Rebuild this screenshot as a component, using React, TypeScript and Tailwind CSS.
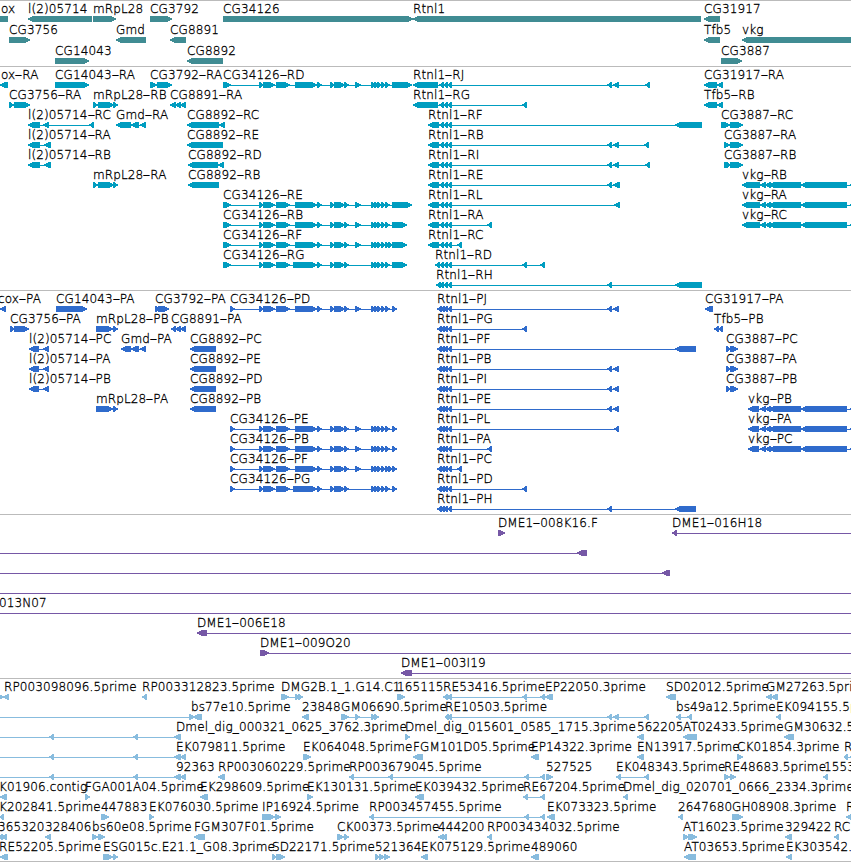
import React from 'react';

type Exon = [number, number];
// label, start of the label, strand, exons, optional extent of the connecting line
type Feature = [string, number, 1 | -1, Exon[], Exon?];

interface TrackData {
  name: string;
  fill: string;
  rowClass: string;
  padClass: string;
  rows: Feature[][];
}

// exons shared by several transcripts
const rtn: Exon[] = [[439, 444], [443, 448], [447, 452]];
const rtnCds: Exon[] = [[437, 442], [439, 445], [442, 448], [447, 452]];
const cgStart: Exon[] = [[259, 263], [263, 275], [276, 290]];
const cgMid: Exon[] = [[295, 317], [317, 322], [330, 334], [334, 345], [344, 349]];
const cgTail: Exon[] = [[371, 375], [374, 379], [377, 382], [381, 386], [385, 390]];
const vkg: Exon[] = [[760, 766], [765, 771], [769, 801], [801, 847], [850, 856]];
const gmd: Exon[] = [[131, 139], [140, 146]];
const cg8891: Exon[] = [[175, 181], [180, 186]];

const genes: Feature[][] = [
  [
    ['ox', 1, -1, [[-20, 8]]],
    ['l(2)05714', 28, -1, [[28, 92]]],
    ['mRpL28', 93, 1, [[93, 116]]],
    ['CG3792', 150, 1, [[150, 172]]],
    ['CG34126', 223, 1, [[223, 413]]],
    ['Rtnl1', 413, -1, [[413, 701]]],
    ['CG31917', 704, -1, [[704, 720]]],
  ],
  [
    ['CG3756', 9, 1, [[9, 30]]],
    ['Gmd', 116, -1, [[116, 146]]],
    ['CG8891', 170, -1, [[170, 186]]],
    ['Tfb5', 704, -1, [[704, 720]]],
    ['vkg', 742, -1, [[742, 870]]],
  ],
  [
    ['CG14043', 55, 1, [[55, 89]]],
    ['CG8892', 187, -1, [[187, 223]]],
    ['CG3887', 721, 1, [[721, 742]]],
  ],
];

const transcripts: Feature[][] = [
  [
    ['ox-RA', 1, -1, [[0, 8]]],
    ['CG14043-RA', 55, 1, [[55, 89]]],
    ['CG3792-RA', 150, 1, [[150, 157], [157, 172]]],
    ['CG34126-RD', 223, 1, [[223, 231], ...cgStart, ...cgMid, [355, 361], ...cgTail, [392, 412]]],
    ['Rtnl1-RJ', 413, -1, [[413, 438], ...rtn, [607, 612], [613, 619], [645, 650]]],
    ['CG31917-RA', 704, -1, [[704, 717], [717, 723]]],
  ],
  [
    ['CG3756-RA', 9, 1, [[9, 14], [14, 30]]],
    ['mRpL28-RB', 93, 1, [[93, 98], [98, 114], [113, 118]]],
    ['CG8891-RA', 170, -1, [[170, 176], ...cg8891]],
    ['Rtnl1-RG', 413, -1, [[413, 438], ...rtn, [522, 527]]],
    ['Tfb5-RB', 704, -1, [[704, 717], [717, 723]]],
  ],
  [
    ['l(2)05714-RC', 28, -1, [[28, 40], [43, 49], [89, 94]]],
    ['Gmd-RA', 116, -1, [[116, 131], ...gmd]],
    ['CG8892-RC', 187, -1, [[187, 219], [219, 225]]],
    ['Rtnl1-RF', 428, -1, [[428, 439], ...rtn, [675, 702]]],
    ['CG3887-RC', 721, 1, [[721, 730], [730, 743]]],
  ],
  [
    ['l(2)05714-RA', 28, -1, [[28, 40], [44, 51]]],
    ['CG8892-RE', 187, -1, [[187, 223]]],
    ['Rtnl1-RB', 428, -1, [[428, 439], ...rtn, [607, 612], [613, 619], [644, 649]]],
    ['CG3887-RA', 724, 1, [[724, 730], [730, 743]]],
  ],
  [
    ['l(2)05714-RB', 28, -1, [[28, 40], [44, 51]]],
    ['CG8892-RD', 188, -1, [[188, 218], [218, 224]]],
    ['Rtnl1-RI', 428, -1, [[428, 439], ...rtn, [607, 612], [613, 619], [645, 650]]],
    ['CG3887-RB', 724, 1, [[724, 729], [726, 731], [730, 743]]],
  ],
  [
    ['mRpL28-RA', 93, 1, [[93, 98], [98, 114], [113, 118]]],
    ['CG8892-RB', 188, -1, [[188, 219]]],
    ['Rtnl1-RE', 428, -1, [[428, 439], ...rtn, [607, 612], [613, 620]]],
    ['vkg-RB', 742, -1, [[742, 760], ...vkg]],
  ],
  [
    ['CG34126-RE', 223, 1, [[223, 231], ...cgStart, ...cgMid, [355, 361], ...cgTail, [392, 412]]],
    ['Rtnl1-RL', 428, -1, [[428, 439], ...rtn, [614, 620]]],
    ['vkg-RA', 742, -1, [[742, 760], ...vkg]],
  ],
  [
    ['CG34126-RB', 223, 1, [[223, 231], ...cgStart, ...cgMid, [355, 361], ...cgTail, [392, 407]]],
    ['Rtnl1-RA', 428, -1, [[428, 439], ...rtn, [487, 492]]],
    ['vkg-RC', 742, -1, [[742, 760], ...vkg]],
  ],
  [
    ['CG34126-RF', 223, 1, [[223, 231], ...cgStart, ...cgMid, [355, 361], ...cgTail, [388, 393], [392, 407]]],
    ['Rtnl1-RC', 428, -1, [[428, 439], ...rtn, [457, 462]]],
  ],
  [
    ['CG34126-RG', 223, 1, [[223, 231], ...cgStart, [293, 297], ...cgMid, ...cgTail, [392, 407]]],
    ['Rtnl1-RD', 435, -1, [[435, 440], ...rtn, [522, 527], [540, 545]]],
  ],
  [['Rtnl1-RH', 436, -1, [[436, 441], ...rtn, [607, 612], [675, 702]]]],
];

const proteins: Feature[][] = [
  [
    ['cox-PA', -2, -1, [[0, 6]]],
    ['CG14043-PA', 56, 1, [[56, 87]]],
    ['CG3792-PA', 155, 1, [[155, 159], [158, 169]]],
    ['CG34126-PD', 230, 1, [[230, 235], ...cgStart, ...cgMid, [355, 361], ...cgTail, [392, 397]]],
    ['Rtnl1-PJ', 437, -1, [...rtnCds, [607, 612], [613, 619]]],
    ['CG31917-PA', 705, -1, [[705, 713]]],
  ],
  [
    ['CG3756-PA', 10, 1, [[10, 14], [14, 29]]],
    ['mRpL28-PB', 96, 1, [[96, 113], [113, 118]]],
    ['CG8891-PA', 171, -1, [[171, 176], ...cg8891]],
    ['Rtnl1-PG', 437, -1, [...rtnCds, [522, 527]]],
    ['Tfb5-PB', 714, -1, [[714, 719], [718, 723]]],
  ],
  [
    ['l(2)05714-PC', 29, -1, [[29, 39], [43, 49]]],
    ['Gmd-PA', 121, -1, [[121, 131], ...gmd]],
    ['CG8892-PC', 190, -1, [[190, 216]]],
    ['Rtnl1-PF', 437, -1, [...rtnCds, [675, 696]]],
    ['CG3887-PC', 726, 1, [[726, 731], [730, 738]]],
  ],
  [
    ['l(2)05714-PA', 29, -1, [[29, 39], [43, 49]]],
    ['CG8892-PE', 190, -1, [[190, 216]]],
    ['Rtnl1-PB', 437, -1, [...rtnCds, [607, 612], [613, 619]]],
    ['CG3887-PA', 726, 1, [[726, 731], [730, 738]]],
  ],
  [
    ['l(2)05714-PB', 29, -1, [[29, 39], [43, 49]]],
    ['CG8892-PD', 190, -1, [[190, 216]]],
    ['Rtnl1-PI', 437, -1, [...rtnCds, [607, 612], [613, 619]]],
    ['CG3887-PB', 726, 1, [[726, 731], [730, 738]]],
  ],
  [
    ['mRpL28-PA', 96, 1, [[96, 113], [113, 118]]],
    ['CG8892-PB', 190, -1, [[190, 216]]],
    ['Rtnl1-PE', 437, -1, [...rtnCds, [607, 612], [613, 619]]],
    ['vkg-PB', 748, -1, [[748, 759], ...vkg]],
  ],
  [
    ['CG34126-PE', 230, 1, [[230, 235], ...cgStart, ...cgMid, [355, 361], ...cgTail, [392, 397]]],
    ['Rtnl1-PL', 437, -1, [...rtnCds, [614, 619]]],
    ['vkg-PA', 748, -1, [[748, 759], ...vkg]],
  ],
  [
    ['CG34126-PB', 230, 1, [[230, 235], ...cgStart, ...cgMid, [355, 361], ...cgTail, [392, 397]]],
    ['Rtnl1-PA', 437, -1, [...rtnCds, [487, 492]]],
    ['vkg-PC', 748, -1, [[748, 759], ...vkg]],
  ],
  [
    ['CG34126-PF', 230, 1, [[230, 235], ...cgStart, ...cgMid, [355, 361], ...cgTail, [388, 393], [392, 397]]],
    ['Rtnl1-PC', 437, -1, [...rtnCds, [457, 462]]],
  ],
  [
    ['CG34126-PG', 230, 1, [[230, 235], ...cgStart, [293, 297], ...cgMid, ...cgTail, [392, 397]]],
    ['Rtnl1-PD', 437, -1, [...rtnCds, [522, 527]]],
  ],
  [['Rtnl1-PH', 437, -1, [...rtnCds, [607, 612], [675, 696]]]],
];

const bacs: Feature[][] = [
  [
    ['DME1-008K16.F', 498, 1, [[498, 505]]],
    ['DME1-016H18', 672, -1, [[672, 677]], [672, 851]],
  ],
  [['', 0, -1, [[577, 587]], [0, 587]]],
  [['', 0, -1, [[662, 670]], [0, 670]]],
  [['', 0, -1, [], [0, 851]]],
  [['013N07', -1, -1, [], [0, 851]]],
  [['DME1-006E18', 197, -1, [[197, 207]], [197, 851]]],
  [['DME1-009O20', 260, 1, [[260, 269]], [260, 851]]],
  [['DME1-003I19', 401, -1, [[401, 412]], [401, 851]]],
];

const ests: Feature[][] = [
  [
    ['', 0, 1, [[-4, 4]]],
    ['RP003098096.5prime', 4, -1, [[3, 9]]],
    ['RP003312823.5prime', 142, -1, [[142, 147]]],
    ['DMG2B.1_1.G14.C1', 281, 1, [[281, 289], [295, 300], [298, 303]]],
    ['165115', 397, 1, [[397, 405]]],
    ['RE53416.5prime', 443, -1, [[443, 448], [446, 452], [522, 527], [540, 545]]],
    ['EP22050.3prime', 545, -1, [[545, 553]]],
    ['SD02012.5prime', 666, -1, [[666, 676]]],
    ['GM27263.5prime', 766, -1, [[766, 772], [771, 778]]],
  ],
  [
    ['', 0, 1, [[189, 195]], [0, 190]],
    ['bs77e10.5prime', 191, -1, [[193, 202]]],
    ['23848', 302, -1, [[302, 309]]],
    ['GM06690.5prime', 341, 1, [[341, 346], [343, 349], [355, 360], [371, 376], [374, 379]]],
    ['RE10503.5prime', 445, -1, [[445, 449], [447, 452], [607, 612], [613, 619], [644, 649]]],
    ['bs49a12.5prime', 676, -1, [[676, 681], [687, 692]]],
    ['EK094155.5prime', 776, -1, [[776, 781]]],
  ],
  [
    ['Dmel_dig_000321_0625_3762.3prime', 176, -1, [[49, 54], [133, 138], [174, 181]], [0, 181]],
    ['Dmel_dig_015601_0585_1715.3prime', 405, 1, [[405, 410]]],
    ['562205', 637, -1, [[637, 644]]],
    ['AT02433.5prime', 683, -1, [[683, 697]]],
    ['GM30632.5prime', 784, -1, [[784, 794]]],
  ],
  [
    ['EK079811.5prime', 176, -1, [[49, 54], [133, 138], [174, 181], [180, 186]], [0, 186]],
    ['EK064048.5prime', 303, 1, [[303, 311]]],
    ['FGM101D05.5prime', 413, -1, [[413, 423]]],
    ['EP14322.3prime', 531, -1, [[531, 539]]],
    ['EN13917.5prime', 637, -1, [[637, 644]]],
    ['CK01854.3prime', 737, 1, [[737, 743]]],
    ['R', 844, -1, [[844, 848], [850, 855]]],
  ],
  [
    ['92363', 176, -1, [[49, 54], [133, 138], [174, 181], [180, 186]], [0, 186]],
    ['RP003060229.5prime', 218, -1, [[218, 225]]],
    ['RP003679045.5prime', 349, -1, [[349, 354], [388, 393], [524, 529], [540, 545]]],
    ['527525', 546, 1, [[546, 553]]],
    ['EK048343.5prime', 616, -1, [[616, 621], [644, 649]]],
    ['RE48683.5prime', 724, 1, [[724, 730], [730, 736]]],
    ['1553', 824, -1, [[823, 828]]],
  ],
  [
    ['K01906.contig', -1, -1, [[0, 7]]],
    ['FGA001A04.5prime', 85, 1, [[85, 90]]],
    ['EK298609.5prime', 200, -1, [[200, 208]]],
    ['EK130131.5prime', 307, 1, [[307, 313]]],
    ['EK039432.5prime', 415, -1, [[415, 424]]],
    ['RE67204.5prime', 523, -1, [[523, 528], [540, 545]]],
    ['Dmel_dig_020701_0666_2334.3prime', 623, -1, [[623, 628]]],
  ],
  [
    ['K202841.5prime', -1, -1, [[0, 4]]],
    ['447883', 101, 1, [[101, 109]]],
    ['EK076030.5prime', 149, 1, [[149, 154]]],
    ['IP16924.5prime', 262, 1, [[262, 275], [275, 281]]],
    ['RP003457455.5prime', 369, -1, [[369, 374], [524, 529], [540, 545]]],
    ['EK073323.5prime', 547, -1, [[547, 555]]],
    ['2647680', 678, -1, [[678, 683]]],
    ['GH08908.3prime', 732, 1, [[732, 743]]],
    ['R', 846, -1, [[846, 854]]],
  ],
  [
    ['365320', -2, -1, [[-2, 3], [1, 7]]],
    ['328406', 45, -1, [[45, 51]]],
    ['bs60e08.5prime', 92, 1, [[92, 98], [98, 105]]],
    ['FGM307F01.5prime', 194, -1, [[194, 205]]],
    ['CK00373.5prime', 337, 1, [[337, 344], [344, 349]]],
    ['444200', 438, -1, [[438, 444], [442, 447]]],
    ['RP003434032.5prime', 487, -1, [[487, 492]]],
    ['AT16023.5prime', 683, 1, [[683, 689], [688, 697]]],
    ['329422', 785, -1, [[785, 792]]],
    ['RC', 834, -1, [[834, 839]]],
  ],
  [
    ['RE52205.5prime', -1, -1, [[0, 8]]],
    ['ESG015c.E21.1_G08.3prime', 103, 1, [[103, 113], [113, 118]]],
    ['SD22171.5prime', 272, 1, [[272, 277], [276, 285]]],
    ['521364', 375, 1, [[375, 380], [379, 385], [384, 390]]],
    ['EK075129.5prime', 421, -1, [[421, 428]]],
    ['489060', 531, -1, [[531, 539]]],
    ['AT03653.5prime', 684, -1, [[684, 696]]],
    ['EK303542.5prime', 786, -1, [[786, 792]]],
  ],
];

const tracks: TrackData[] = [
  { name: 'genes', fill: 'fill-[#408c93]', rowClass: 'h-[21px]', padClass: 'pb-0.5', rows: genes },
  { name: 'transcripts', fill: 'fill-[#009dc0]', rowClass: 'h-5', padClass: 'pb-[3px]', rows: transcripts },
  { name: 'proteins', fill: 'fill-[#2f6bcc]', rowClass: 'h-5', padClass: 'pb-[3px]', rows: proteins },
  { name: 'bacs', fill: 'fill-[#7658a6]', rowClass: 'h-5', padClass: 'pb-[3px]', rows: bacs },
  { name: 'ests', fill: 'fill-[#88bcde]', rowClass: 'h-5', padClass: 'pb-0.5', rows: ests },
];

const arrow = ([start, end]: Exon, strand: number) => {
  const head = Math.min(end - start, 6);
  return strand === 1
    ? `M${start} 0H${end - head + 1}L${end} 2.5V3.5L${end - head + 1} 6H${start}Z`
    : `M${end} 0H${start + head - 1}L${start} 2.5V3.5L${start + head - 1} 6H${end}Z`;
};

const Glyph = ({ feature }: { feature: Feature }) => {
  const [, , strand, exons, extent] = feature;
  const from = extent ? extent[0] : exons[0][0];
  const to = extent ? extent[1] : exons[exons.length - 1][1];
  return (
    <g>
      {(extent || exons.length > 1) && <rect x={from} y={3} width={to - from} height={1} />}
      {exons.map((exon, i) => <path key={i} d={arrow(exon, strand)} />)}
    </g>
  );
};

// hyphens are drawn as wide as a digit
const Label = ({ text, x }: { text: string; x: number }) => (
  <span className="absolute top-0 whitespace-pre" style={{ left: x }}>
    {text.split('-').map((part, i) => (
      <React.Fragment key={i}>
        {i > 0 && <span className="inline-block w-[7px] text-center scale-x-[1.8]">-</span>}
        {part}
      </React.Fragment>
    ))}
  </span>
);

const Track = ({ track }: { track: TrackData }) => (
  <section className={`border-t border-[#bbbbbb] ${track.padClass}`}>
    {track.rows.map((row, i) => (
      <div key={i} className={`relative flex flex-col pt-[15px] ${track.rowClass}`}>
        {row.map((feature, j) => feature[0] && <Label key={j} text={feature[0]} x={feature[1]} />)}
        <svg width={851} height={6} shapeRendering="crispEdges" className={`block shrink-0 ${track.fill}`}>
          {row.map((feature, j) => <Glyph key={j} feature={feature} />)}
        </svg>
      </div>
    ))}
  </section>
);

export default function App() {
  return (
    <main className="w-[851px] h-[862px] overflow-hidden bg-white text-black font-['DejaVu_Sans',sans-serif] font-extralight text-[12px] leading-4 tracking-[0.12px] [-webkit-text-stroke:0.3px_black]">
      {tracks.map(track => <Track key={track.name} track={track} />)}
      <div className="border-t border-[#bbbbbb]" />
    </main>
  );
}
